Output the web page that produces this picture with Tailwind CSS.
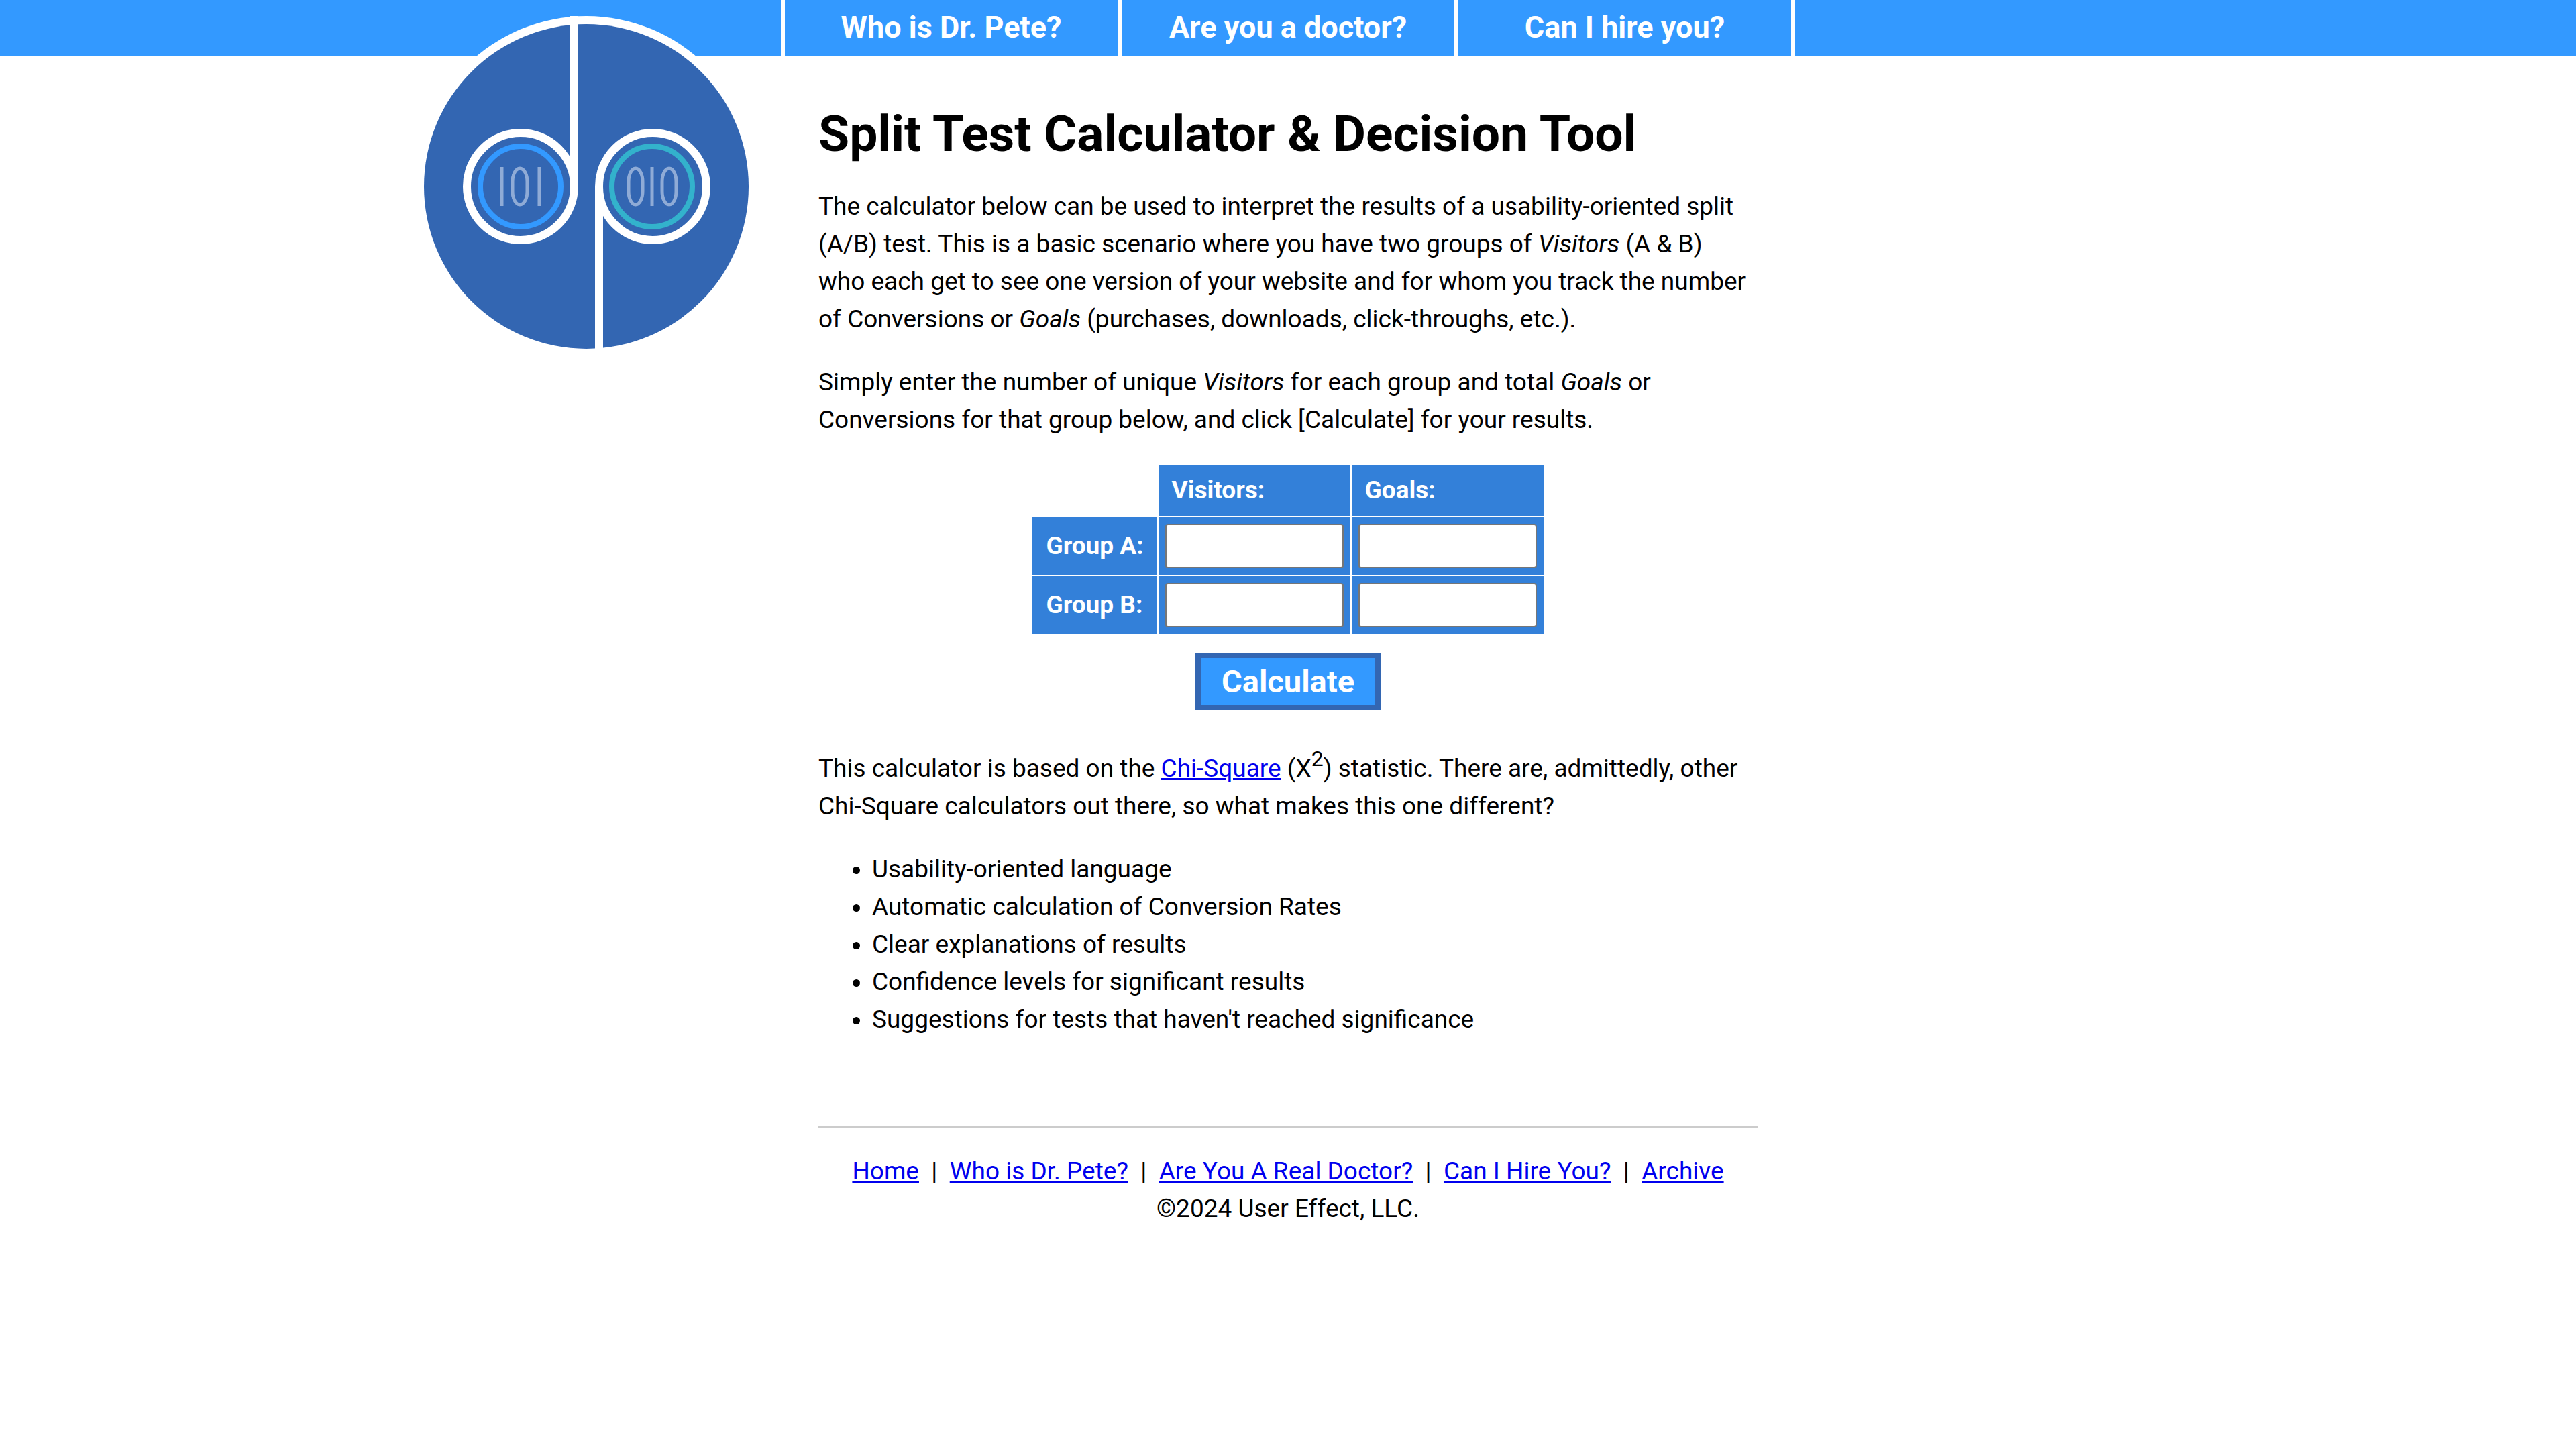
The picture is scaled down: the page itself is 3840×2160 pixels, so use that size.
<!DOCTYPE html>
<html lang="en">
<head>
<meta charset="utf-8">
<meta name="viewport" content="width=device-width, initial-scale=1">
<title>Split Test Calculator &amp; Decision Tool</title>
<script src="https://cdn.jsdelivr.net/npm/@tailwindcss/browser@4"></script>
</head>
<body class="bg-white text-black font-[Roboto,sans-serif] text-[37px] leading-[56px]">
<header class="bg-[#3399ff]">
  <nav aria-label="Main">
    <ul class="mx-auto grid max-w-[1512px] grid-cols-3 gap-[6px] border-x-[6px] border-white bg-white text-center text-[45px] font-bold text-white">
      <li><a href="#who" class="block bg-[#3399ff] pb-[2px] leading-[82px]">Who is Dr. Pete?</a></li>
      <li><a href="#doctor" class="block bg-[#3399ff] pb-[2px] leading-[82px]">Are you a doctor?</a></li>
      <li><a href="#hire" class="block bg-[#3399ff] pb-[2px] leading-[82px]">Can I hire you?</a></li>
    </ul>
  </nav>
</header>
<div class="grid grid-cols-[1fr_minmax(0,1400px)_1fr] gap-x-[104px]">
  <a href="#home" class="-mt-[60px] h-[496px] w-[484px] justify-self-end" aria-label="Home">
    <svg class="block h-[496px] w-[484px]" viewBox="0 0 484 496" fill="none">
      <circle cx="242" cy="254" r="254" fill="#fff"/>
      <circle cx="242" cy="254" r="242" fill="#3366b2"/>
      <g stroke="#fff" stroke-width="12">
        <path d="M224 0V254"/>
        <path d="M261 254V496"/>
        <circle cx="144" cy="254" r="80"/>
        <circle cx="341" cy="254" r="80"/>
      </g>
      <circle cx="144" cy="254" r="60" stroke="#3399ff" stroke-width="8"/>
      <circle cx="340" cy="254" r="60" stroke="#33b2cc" stroke-width="8"/>
      <g stroke="#8fabd6" stroke-width="5">
        <path d="M116 225V283M172 225V283M340 225V283"/>
        <rect x="132" y="227" width="22" height="54" rx="11" ry="20"/>
        <rect x="305" y="227" width="21" height="54" rx="11" ry="20"/>
        <rect x="355" y="227" width="21" height="54" rx="11" ry="20"/>
      </g>
    </svg>
  </a>
  <div class="pt-[70px]">
    <main>
      <h1 class="mb-[36px] text-[75px] leading-[90px] font-bold">Split Test Calculator &amp; Decision Tool</h1>
      <p class="mb-[38px]">The calculator below can be used to interpret the results of a usability-oriented split (A/B) test. This is a basic scenario where you have two groups of <em>Visitors</em> (A &amp; B)<br> who each get to see one version of your website and for whom you track the number of Conversions or <em>Goals</em> (purchases, downloads, click-throughs, etc.).</p>
      <p class="mb-[37px]">Simply enter the number of unique <em>Visitors</em> for each group and total <em>Goals</em> or Conversions for that group below, and click [Calculate] for your results.</p>
      <form class="flex flex-col items-center gap-[26px]">
        <table class="border-separate border-spacing-[2px] text-left font-bold text-white">
          <thead>
            <tr>
              <td></td>
              <th id="visitors" scope="col" class="h-[76px] bg-[#3380d9] px-[20px] py-0">Visitors:</th>
              <th id="goals" scope="col" class="h-[76px] bg-[#3380d9] px-[20px] py-0">Goals:</th>
            </tr>
          </thead>
          <tbody>
            <tr>
              <th id="group-a" scope="row" class="bg-[#3380d9] px-[20px] py-0">Group A:</th>
              <td class="bg-[#3380d9] p-[10px]"><input type="text" aria-labelledby="group-a visitors" class="block h-[66px] w-[266px] rounded-[4px] border-2 border-[#767676] bg-white px-2 text-black"></td>
              <td class="bg-[#3380d9] p-[10px]"><input type="text" aria-labelledby="group-a goals" class="block h-[66px] w-[266px] rounded-[4px] border-2 border-[#767676] bg-white px-2 text-black"></td>
            </tr>
            <tr>
              <th id="group-b" scope="row" class="bg-[#3380d9] px-[20px] py-0">Group B:</th>
              <td class="bg-[#3380d9] p-[10px]"><input type="text" aria-labelledby="group-b visitors" class="block h-[66px] w-[266px] rounded-[4px] border-2 border-[#767676] bg-white px-2 text-black"></td>
              <td class="bg-[#3380d9] p-[10px]"><input type="text" aria-labelledby="group-b goals" class="block h-[66px] w-[266px] rounded-[4px] border-2 border-[#767676] bg-white px-2 text-black"></td>
            </tr>
          </tbody>
        </table>
        <button type="button" class="border-8 border-[#3366b2] bg-[#3399ff] px-[31px] text-[47px] leading-[70px] font-bold text-white">Calculate</button>
      </form>
      <p class="mt-[59px] mb-[38px]">This calculator is based on the <a href="#chi" class="text-[#0000ee] underline">Chi-Square</a> (X<sup class="text-[32px]">2</sup>) statistic. There are, admittedly, other Chi-Square calculators out there, so what makes this one different?</p>
      <ul class="list-disc pl-[80px]">
        <li>Usability-oriented language</li>
        <li>Automatic calculation of Conversion Rates</li>
        <li>Clear explanations of results</li>
        <li>Confidence levels for significant results</li>
        <li>Suggestions for tests that haven't reached significance</li>
      </ul>
    </main>
    <footer class="mt-[131px] border-t-2 border-[#cccccc] pt-[37px] text-center">
      <a href="#home" class="text-[#0000ee] underline">Home</a> &nbsp;|&nbsp;
      <a href="#who" class="text-[#0000ee] underline">Who is Dr. Pete?</a> &nbsp;|&nbsp;
      <a href="#doctor" class="text-[#0000ee] underline">Are You A Real Doctor?</a> &nbsp;|&nbsp;
      <a href="#hire" class="text-[#0000ee] underline">Can I Hire You?</a> &nbsp;|&nbsp;
      <a href="#archive" class="text-[#0000ee] underline">Archive</a>
      <p>©2024 User Effect, LLC.</p>
    </footer>
  </div>
</div>
</body>
</html>
